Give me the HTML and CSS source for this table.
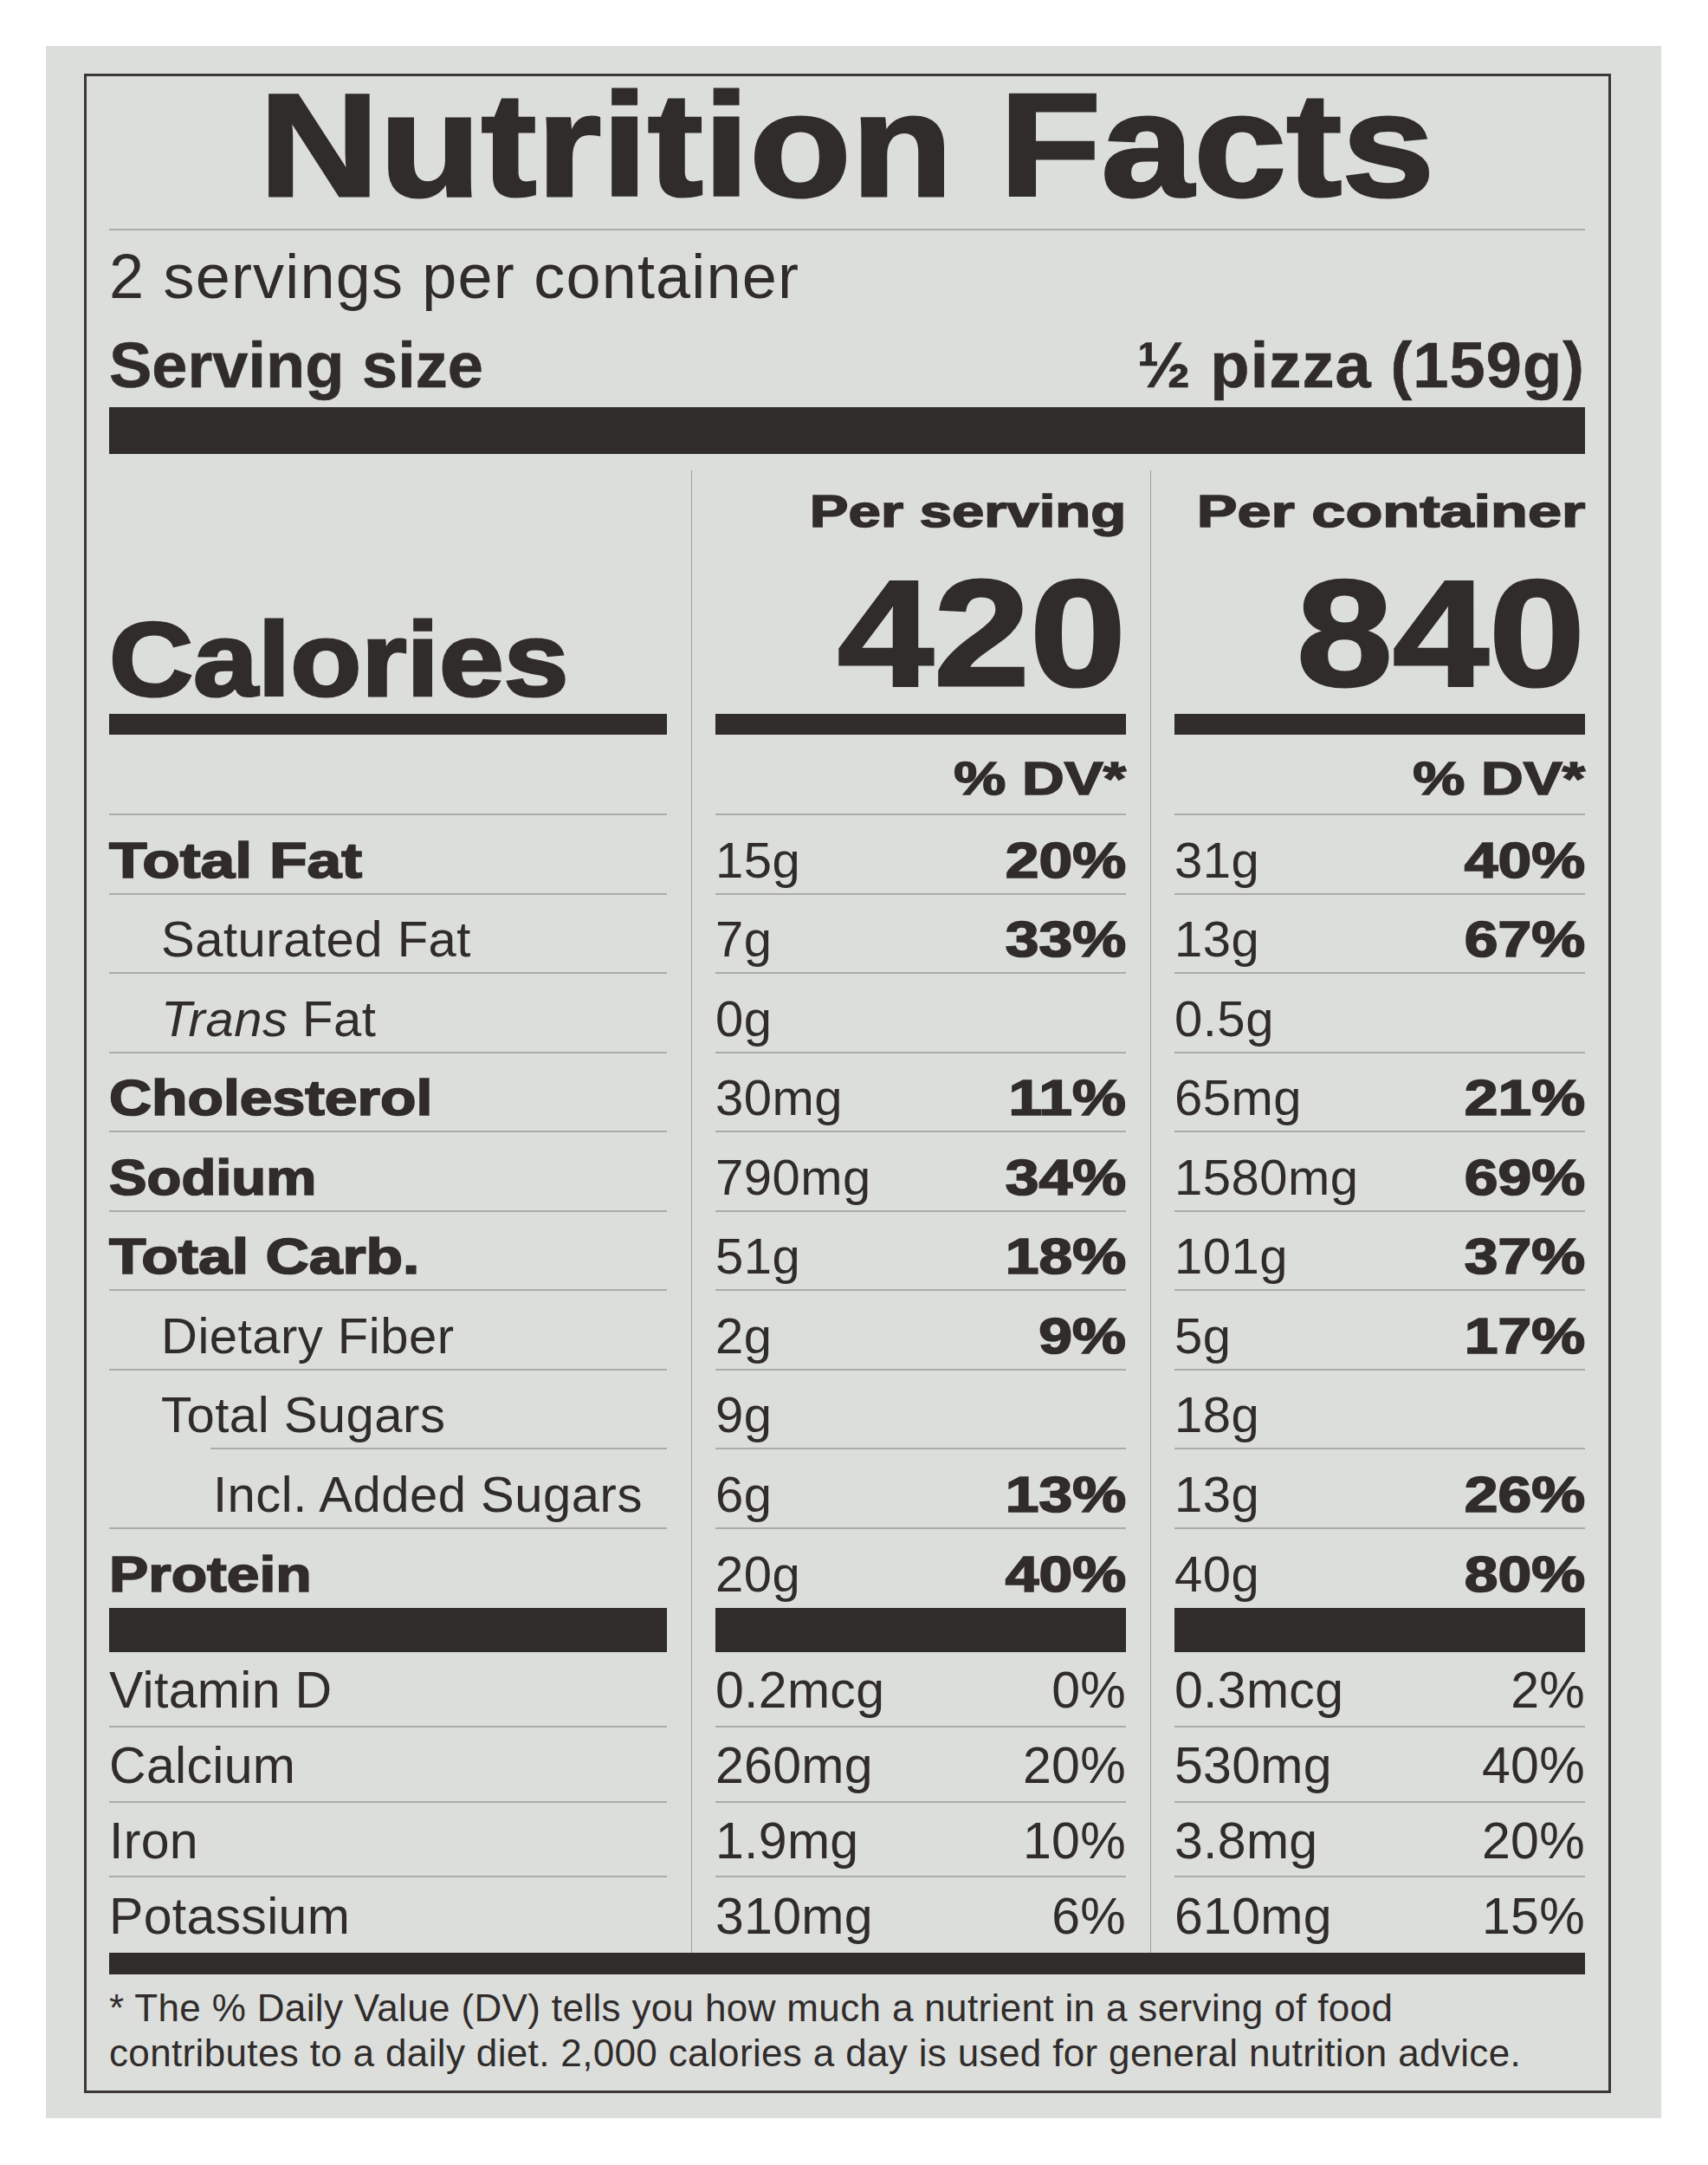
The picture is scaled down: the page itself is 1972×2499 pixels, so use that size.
FILE: index.html
```html
<!DOCTYPE html>
<html lang="en">
<head>
<meta charset="utf-8">
<title>Nutrition Facts</title>
<link rel="stylesheet" href="styles.css">
</head>
<body>
<div class="card">
  <section class="label">
    <h1 class="title"><span class="blk ctr">Nutrition Facts</span></h1>
    <p class="servings">2 servings per container</p>
    <div class="size"><span>Serving size</span><span class="size-v">½ pizza (159g)</span></div>
    <div class="bar-top"></div>

    <div class="grid">
      <div class="sep sep1"></div>
      <div class="sep sep2"></div>

      <div class="c"></div>
      <div class="c hdr"><span class="blk r s-ps">Per serving</span></div>
      <div class="c hdr"><span class="blk r s-pc">Per container</span></div>

      <div class="c cal"><span class="blk">Calories</span></div>
      <div class="c num"><span class="blk r">420</span></div>
      <div class="c num"><span class="blk r">840</span></div>

      <div class="c fill"></div>
      <div class="c fill"></div>
      <div class="c fill"></div>

      <div class="c dv ln"></div>
      <div class="c dv ln"><span class="blk r">% DV*</span></div>
      <div class="c dv ln"><span class="blk r">% DV*</span></div>

      <div class="c n ln"><span class="blk s-fat">Total Fat</span></div>
      <div class="c n ln v"><span>15g</span><span class="blk r">20%</span></div>
      <div class="c n ln v"><span>31g</span><span class="blk r">40%</span></div>

      <div class="c n ln ind1"><span>Saturated Fat</span></div>
      <div class="c n ln v"><span>7g</span><span class="blk r">33%</span></div>
      <div class="c n ln v"><span>13g</span><span class="blk r">67%</span></div>

      <div class="c n ln ind1"><span><i>Trans</i> Fat</span></div>
      <div class="c n ln v"><span>0g</span></div>
      <div class="c n ln v"><span>0.5g</span></div>

      <div class="c n ln"><span class="blk">Cholesterol</span></div>
      <div class="c n ln v"><span>30mg</span><span class="blk r">11%</span></div>
      <div class="c n ln v"><span>65mg</span><span class="blk r">21%</span></div>

      <div class="c n ln"><span class="blk s-sod">Sodium</span></div>
      <div class="c n ln v"><span>790mg</span><span class="blk r">34%</span></div>
      <div class="c n ln v"><span>1580mg</span><span class="blk r">69%</span></div>

      <div class="c n ln"><span class="blk s-carb">Total Carb.</span></div>
      <div class="c n ln v"><span>51g</span><span class="blk r">18%</span></div>
      <div class="c n ln v"><span>101g</span><span class="blk r">37%</span></div>

      <div class="c n ln ind1"><span>Dietary Fiber</span></div>
      <div class="c n ln v"><span>2g</span><span class="blk r">9%</span></div>
      <div class="c n ln v"><span>5g</span><span class="blk r">17%</span></div>

      <div class="c n ln ln-in ind1"><span>Total Sugars</span></div>
      <div class="c n ln v"><span>9g</span></div>
      <div class="c n ln v"><span>18g</span></div>

      <div class="c n ln ind2"><span>Incl. Added Sugars</span></div>
      <div class="c n ln v"><span>6g</span><span class="blk r">13%</span></div>
      <div class="c n ln v"><span>13g</span><span class="blk r">26%</span></div>

      <div class="c n prot"><span class="blk">Protein</span></div>
      <div class="c n prot v"><span>20g</span><span class="blk r">40%</span></div>
      <div class="c n prot v"><span>40g</span><span class="blk r">80%</span></div>

      <div class="c fill"></div>
      <div class="c fill"></div>
      <div class="c fill"></div>

      <div class="c vt ln"><span>Vitamin D</span></div>
      <div class="c vt ln v"><span>0.2mcg</span><span>0%</span></div>
      <div class="c vt ln v"><span>0.3mcg</span><span>2%</span></div>

      <div class="c vt ln"><span>Calcium</span></div>
      <div class="c vt ln v"><span>260mg</span><span>20%</span></div>
      <div class="c vt ln v"><span>530mg</span><span>40%</span></div>

      <div class="c vt ln"><span>Iron</span></div>
      <div class="c vt ln v"><span>1.9mg</span><span>10%</span></div>
      <div class="c vt ln v"><span>3.8mg</span><span>20%</span></div>

      <div class="c vt"><span>Potassium</span></div>
      <div class="c vt v"><span>310mg</span><span>6%</span></div>
      <div class="c vt v"><span>610mg</span><span>15%</span></div>
    </div>

    <div class="bar-bottom"></div>
    <p class="foot">* The % Daily Value (DV) tells you how much a nutrient in a serving of food<br>contributes to a daily diet. 2,000 calories a day is used for general nutrition advice.</p>
  </section>
</div>
</body>
</html>
```
FILE: styles.css
```css
:root {
  --ink: #302c2b;
  --line: #abaca9;
  --rule: #9fa09d;
  --paper: #dcdedb;
}
* { box-sizing: border-box; margin: 0; padding: 0; }
html, body { background: #ffffff; }
body {
  font-family: "Liberation Sans", Arial, Helvetica, sans-serif;
  color: var(--ink);
}
.card {
  margin: 53px 0 0 53px;
  width: 1865px;
  height: 2392px;
  background: var(--paper);
  padding: 32px 0 0 44px;
}
.label {
  width: 1763px;
  border: 3px solid #3b3737;
  padding: 0 27px 17px 26px;
}

/* heavy "black" text built from bold + stroke + horizontal stretch */
.blk {
  display: inline-block;
  white-space: nowrap;
  font-weight: 700;
  letter-spacing: 0;
  -webkit-text-stroke: 0.03em currentColor;
  transform: scaleX(var(--sx, 1.17));
  transform-origin: left bottom;
}
.blk.r { transform-origin: right bottom; }
.blk.ctr { transform-origin: center bottom; }

.title {
  font-size: 168px;
  line-height: 160px;
  font-weight: 700;
  text-align: center;
  padding-bottom: 16px;
  border-bottom: 2px solid var(--line);
}
.title .blk { --sx: 1.145; -webkit-text-stroke: 3px currentColor; }

.servings {
  margin-top: 17px;
  font-size: 72px;
  line-height: 72px;
  letter-spacing: 1.2px;
}
.size {
  margin-top: 30px;
  display: flex;
  justify-content: space-between;
  font-size: 74px;
  line-height: 74px;
  font-weight: 700;
  -webkit-text-stroke: 0.6px currentColor;
}
.size-v { letter-spacing: 1.1px; }
.bar-top {
  margin-top: 11px;
  height: 54px;
  background: var(--ink);
}

.grid {
  margin-top: 19px;
  display: grid;
  grid-template-columns: 644px 56px 474px 56px 474px;
  grid-template-rows: 77px 204px 24px 93px repeat(10, 91.5px) 51px repeat(4, 86.75px);
}
.sep {
  grid-row: 1 / -1;
  justify-self: center;
  width: 1px;
  background: var(--rule);
}
.sep1 { grid-column: 2; }
.sep2 { grid-column: 4; }

.c {
  display: flex;
  align-items: flex-end;
  min-width: 0;
  white-space: nowrap;
}
.ln {
  background: linear-gradient(var(--line), var(--line)) no-repeat left bottom / 100% 2px;
}
.ln-in {
  background-position: 117px 100%;
  background-size: calc(100% - 117px) 2px;
}
.fill { background: var(--ink); }

.hdr {
  justify-content: flex-end;
  align-items: flex-start;
  padding-top: 21px;
  font-size: 52px;
  line-height: 52px;
}
.s-ps { --sx: 1.29; }
.s-pc { --sx: 1.35; }

.cal {
  font-size: 120px;
  line-height: 120px;
  padding-bottom: 3px;
}
.cal .blk { --sx: 1.12; -webkit-text-stroke: 3px currentColor; }

.num {
  justify-content: flex-end;
  font-size: 175px;
  line-height: 175px;
  padding-bottom: 6px;
}
.num .blk { --sx: 1.14; -webkit-text-stroke: 3px currentColor; }

.dv {
  justify-content: flex-end;
  font-size: 54px;
  line-height: 54px;
  padding-bottom: 16px;
}
.dv .blk { --sx: 1.25; }

.n {
  font-size: 58px;
  line-height: 58px;
  padding-bottom: 11px;
  letter-spacing: 0.5px;
}
.n .blk { --sx: 1.17; }
.n .blk.r { --sx: 1.2; }
.n .blk.s-fat { --sx: 1.23; }
.n .blk.s-sod { --sx: 1.125; }
.n .blk.s-carb { --sx: 1.2; }
.prot { padding-bottom: 10px; }

.v { justify-content: space-between; }
.ind1 { padding-left: 60px; }
.ind2 { padding-left: 120px; }

.vt {
  font-size: 59px;
  line-height: 59px;
  padding-bottom: 12.5px;
  letter-spacing: 0.3px;
}

.bar-bottom {
  height: 25px;
  background: var(--ink);
}
.foot {
  margin-top: 13px;
  font-size: 44px;
  line-height: 52px;
  letter-spacing: 0.35px;
  white-space: nowrap;
}
```
